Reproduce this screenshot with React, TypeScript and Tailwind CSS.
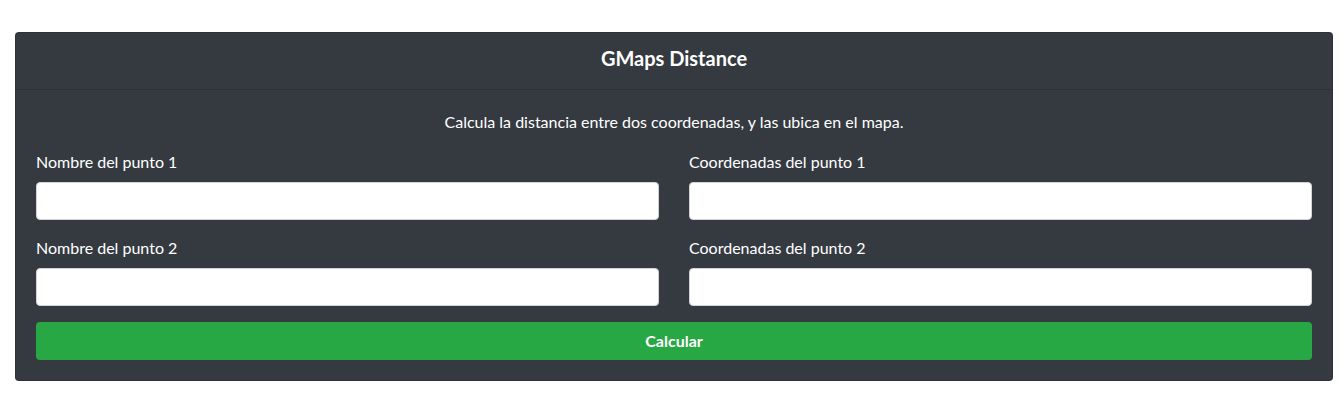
import React from "react";

export default function App() {
  const font = { fontFamily: 'Lato, "Noto Sans", sans-serif' };
  return (
    <div className="bg-white min-h-[408px] pt-[32px] pl-[15px] pr-[11px]" style={font}>
      <div className="bg-[#343a40] text-white rounded-[4px] border border-[rgba(0,0,0,0.125)]">
        <div className="px-5 pt-[13px] pb-[19px] border-b border-[rgba(0,0,0,0.125)] text-center">
          <h5 className="text-[20px] leading-[24px] font-bold">GMaps Distance</h5>
        </div>
        <div className="p-5">
          <p className="text-center text-[16px] leading-[24px] mb-4">
            Calcula la distancia entre dos coordenadas, y las ubica en el mapa.
          </p>
          <div className="grid grid-cols-2 gap-x-[30px] gap-y-4">
            {["Nombre del punto 1", "Coordenadas del punto 1", "Nombre del punto 2", "Coordenadas del punto 2"].map((l) => (
              <div key={l} className="flex flex-col">
                <label className="text-[16px] leading-[24px] mb-2">{l}</label>
                <input
                  type="text"
                  className="h-[38px] bg-white border border-[#ced4da] rounded-[4px] px-3 text-[#495057] outline-none"
                />
              </div>
            ))}
          </div>
          <button className="mt-4 w-full h-[38px] bg-[#28a745] rounded-[4px] text-white font-bold text-[16px]">
            Calcular
          </button>
        </div>
      </div>
    </div>
  );
}
